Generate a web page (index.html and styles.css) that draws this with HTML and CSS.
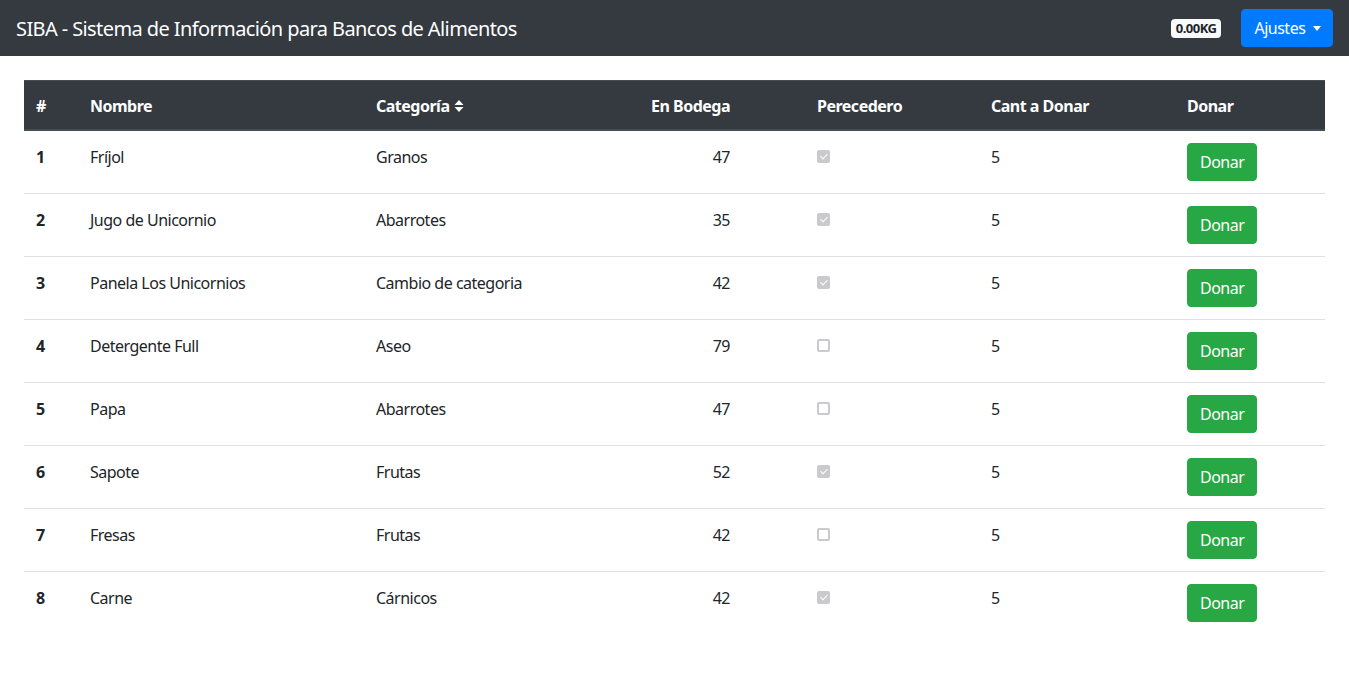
FILE: index.html
```html
<!DOCTYPE html>
<html lang="es">
<head>
<meta charset="utf-8">
<title>SIBA</title>
<link rel="stylesheet" href="styles.css">
</head>
<body>
<nav class="navbar">
  <span class="brand">SIBA - Sistema de Información para Bancos de Alimentos</span>
  <div class="nav-right">
    <span class="badge">0.00KG</span>
    <button class="btn btn-primary">Ajustes <span class="caret"></span></button>
  </div>
</nav>
<main class="container">
  <table class="table">
    <colgroup>
      <col class="c-num"><col class="c-name"><col class="c-cat"><col class="c-bod"><col class="c-per"><col class="c-cant"><col class="c-don">
    </colgroup>
    <thead>
      <tr>
        <th>#</th>
        <th>Nombre</th>
        <th>Categoría <svg class="sort" width="10" height="14" viewBox="0 0 10 14"><path d="M5 1 L9.5 6 H0.5 Z M0.5 8 H9.5 L5 13 Z" fill="#fff"/></svg></th>
        <th class="right">En Bodega</th>
        <th>Perecedero</th>
        <th>Cant a Donar</th>
        <th>Donar</th>
      </tr>
    </thead>
    <tbody>
      <tr><th>1</th><td>Fríjol</td><td>Granos</td><td class="right">47</td><td><span class="check on"></span></td><td>5</td><td class="act"><button class="btn btn-success">Donar</button></td></tr>
      <tr><th>2</th><td>Jugo de Unicornio</td><td>Abarrotes</td><td class="right">35</td><td><span class="check on"></span></td><td>5</td><td class="act"><button class="btn btn-success">Donar</button></td></tr>
      <tr><th>3</th><td>Panela Los Unicornios</td><td>Cambio de categoria</td><td class="right">42</td><td><span class="check on"></span></td><td>5</td><td class="act"><button class="btn btn-success">Donar</button></td></tr>
      <tr><th>4</th><td>Detergente Full</td><td>Aseo</td><td class="right">79</td><td><span class="check"></span></td><td>5</td><td class="act"><button class="btn btn-success">Donar</button></td></tr>
      <tr><th>5</th><td>Papa</td><td>Abarrotes</td><td class="right">47</td><td><span class="check"></span></td><td>5</td><td class="act"><button class="btn btn-success">Donar</button></td></tr>
      <tr><th>6</th><td>Sapote</td><td>Frutas</td><td class="right">52</td><td><span class="check on"></span></td><td>5</td><td class="act"><button class="btn btn-success">Donar</button></td></tr>
      <tr><th>7</th><td>Fresas</td><td>Frutas</td><td class="right">42</td><td><span class="check"></span></td><td>5</td><td class="act"><button class="btn btn-success">Donar</button></td></tr>
      <tr><th>8</th><td>Carne</td><td>Cárnicos</td><td class="right">42</td><td><span class="check on"></span></td><td>5</td><td class="act"><button class="btn btn-success">Donar</button></td></tr>
    </tbody>
  </table>
</main>
</body>
</html>
```
FILE: styles.css
```css
* { box-sizing: border-box; }
html, body { margin: 0; padding: 0; }
body {
  font-family: "Noto Sans", "Open Sans", sans-serif;
  font-size: 16px;
  line-height: 1.5;
  color: #212529;
  background: #fff;
  letter-spacing: -0.5px;
}
.navbar {
  height: 56px;
  background: #343a40;
  display: flex;
  align-items: center;
  justify-content: space-between;
  padding: 0 16px;
}
.brand {
  color: #fff;
  font-size: 20px;
  line-height: 30px;
  letter-spacing: -0.6px;
  padding-top: 2px;
}
.nav-right { display: flex; align-items: center; gap: 20px; }
.badge {
  background: #f8f9fa;
  color: #212529;
  font-size: 13px;
  font-weight: 700;
  line-height: 13px;
  padding: 3px 5px;
  border-radius: 4px;
  letter-spacing: -0.5px;
}
.btn {
  font-family: inherit;
  font-size: 16px;
  letter-spacing: -0.5px;
  line-height: 24px;
  padding: 6px 12px;
  border: 1px solid transparent;
  border-radius: 4px;
  color: #fff;
  cursor: pointer;
}
.btn-primary { background: #007bff; border-color: #007bff; height: 38px; padding: 6px 11px 6px 12px; }
.btn-success { background: #28a745; border-color: #28a745; height: 38px; }
.caret {
  display: inline-block;
  width: 0; height: 0;
  margin-left: 4px;
  vertical-align: 3px;
  border-top: 5px solid #fff;
  border-left: 4.5px solid transparent;
  border-right: 4.5px solid transparent;
}
.container { padding: 24px 24px 0; }
.table {
  width: 100%;
  border-collapse: collapse;
  table-layout: fixed;
}
.c-num { width: 54px; }
.c-name { width: 286px; }
.c-cat { width: 240px; }
.c-bod { width: 201px; }
.c-per { width: 174px; }
.c-cant { width: 196px; }
.c-don { width: auto; }
.table th, .table td {
  padding: 14px 12px 10px;
  text-align: left;
  vertical-align: top;
  border-top: 1px solid #dee2e6;
  font-size: 16px;
  line-height: 24px;
}
.table td.act { padding: 12px; }
.table thead th {
  background: #343a40;
  color: #fff;
  font-weight: 700;
  border-top: 1px solid #454d55;
  border-bottom: 2px solid #454d55;
  vertical-align: bottom;
  padding: 13px 12px 11px;
}
.table tbody th { font-weight: 700; }
.table .right { text-align: right; padding-right: 75px; }
.table thead th.right { padding-right: 75px; }
.sort { vertical-align: -1px; margin-left: 1px; }
.check {
  display: inline-block;
  width: 13px; height: 13px;
  border: 2px solid #c9c9ce;
  border-radius: 2px;
  margin-top: 5px;
  vertical-align: top;
  position: relative;
}
.check.on { background: #c9c9ce; }
.check.on::after {
  content: "";
  position: absolute;
  left: 2.5px; top: 0;
  width: 3px; height: 6px;
  border: solid #fff;
  border-width: 0 1.5px 1.5px 0;
  transform: rotate(45deg);
}
```
